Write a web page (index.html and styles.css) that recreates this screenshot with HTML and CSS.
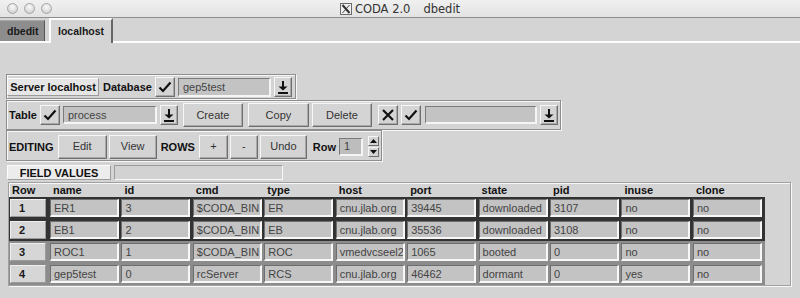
FILE: index.html
```html
<!DOCTYPE html>
<html>
<head>
<meta charset="utf-8">
<title>CODA 2.0 dbedit</title>
<link rel="stylesheet" href="styles.css">
</head>
<body>
<div class="window">
  <div class="titlebar">
    <div class="lights"><span class="light"></span><span class="light"></span><span class="light"></span></div>
    <div class="title">
      <svg class="xlogo" width="12" height="12" viewBox="0 0 12 12"><rect x="0.5" y="0.5" width="11" height="11" fill="#f0f0f0" stroke="#6a6a6a"/><line x1="2.5" y1="2" x2="9.5" y2="10" stroke="#333" stroke-width="2"/><line x1="9.5" y1="2" x2="2.5" y2="10" stroke="#333" stroke-width="0.9"/></svg>
      <span>CODA 2.0</span><span class="app">dbedit</span>
    </div>
    <div></div>
  </div>

  <div class="tabstrip">
    <div class="tab inactive">dbedit</div>
    <div class="tab active">localhost</div>
  </div>

  <div class="main">
    <div class="frame f-server">
      <div class="tag">Server localhost</div>
      <div class="lbl">Database</div>
      <div class="ibtn"><svg width="14" height="12" viewBox="0 0 14 12"><path d="M1.5 6.5 L5 10 L12.5 1.5" fill="none" stroke="#111" stroke-width="2.2"/></svg></div>
      <div class="field w93">gep5test</div>
      <div class="ibtn dl"><svg width="10" height="13" viewBox="0 0 10 13"><rect x="4" y="0" width="2" height="6" fill="#111"/><path d="M0.5 5.5 H9.5 L5 9.5 Z" fill="#111"/><rect x="0" y="11" width="10" height="2" fill="#111"/></svg></div>
    </div>

    <div class="frame f-table">
      <div class="lbl">Table</div>
      <div class="ibtn"><svg width="14" height="12" viewBox="0 0 14 12"><path d="M1.5 6.5 L5 10 L12.5 1.5" fill="none" stroke="#111" stroke-width="2.2"/></svg></div>
      <div class="field w94 short">process</div>
      <div class="ibtn dl"><svg width="10" height="13" viewBox="0 0 10 13"><rect x="4" y="0" width="2" height="6" fill="#111"/><path d="M0.5 5.5 H9.5 L5 9.5 Z" fill="#111"/><rect x="0" y="11" width="10" height="2" fill="#111"/></svg></div>
      <div class="btn w60 ml2">Create</div>
      <div class="btn w61 ml2">Copy</div>
      <div class="btn w60">Delete</div>
      <div class="ibtn ml3"><svg width="12" height="12" viewBox="0 0 12 12"><path d="M1 1 L11 11 M11 1 L1 11" stroke="#111" stroke-width="2.2"/></svg></div>
      <div class="ibtn"><svg width="14" height="12" viewBox="0 0 14 12"><path d="M1.5 6.5 L5 10 L12.5 1.5" fill="none" stroke="#111" stroke-width="2.2"/></svg></div>
      <div class="field w112 short ml1"></div>
      <div class="ibtn dl"><svg width="10" height="13" viewBox="0 0 10 13"><rect x="4" y="0" width="2" height="6" fill="#111"/><path d="M0.5 5.5 H9.5 L5 9.5 Z" fill="#111"/><rect x="0" y="11" width="10" height="2" fill="#111"/></svg></div>
    </div>

    <div class="frame f-edit">
      <div class="lbl">EDITING</div>
      <div class="btn w49 ml1">Edit</div>
      <div class="btn w48 tight">View</div>
      <div class="lbl">ROWS</div>
      <div class="btn w29 ml1">+</div>
      <div class="btn w28 tight">-</div>
      <div class="btn w47 tight">Undo</div>
      <div class="lbl ml2">Row</div>
      <div class="field spinfield">1</div>
      <div class="spinner ml2">
        <div class="sp"><svg width="7" height="4" viewBox="0 0 7 4"><path d="M0 4 L3.5 0 L7 4 Z" fill="#111"/></svg></div>
        <div class="sp"><svg width="7" height="4" viewBox="0 0 7 4"><path d="M0 0 L3.5 4 L7 0 Z" fill="#111"/></svg></div>
      </div>
    </div>

    <div class="fv">
      <div class="fvlabel">FIELD VALUES</div>
      <div class="fvbox"></div>
    </div>

    <div class="grid">
      <div class="head">
        <div class="h hrow">Row</div><div class="h">name</div><div class="h">id</div><div class="h">cmd</div><div class="h">type</div><div class="h">host</div><div class="h">port</div><div class="h">state</div><div class="h">pid</div><div class="h">inuse</div><div class="h">clone</div>
      </div>
      <div class="row dark">
        <div class="num">1</div><div class="cell">ER1</div><div class="cell">3</div><div class="cell">$CODA_BIN</div><div class="cell">ER</div><div class="cell">cnu.jlab.org</div><div class="cell">39445</div><div class="cell">downloaded</div><div class="cell">3107</div><div class="cell">no</div><div class="cell">no</div>
      </div>
      <div class="row dark">
        <div class="num">2</div><div class="cell">EB1</div><div class="cell">2</div><div class="cell">$CODA_BIN</div><div class="cell">EB</div><div class="cell">cnu.jlab.org</div><div class="cell">35536</div><div class="cell">downloaded</div><div class="cell">3108</div><div class="cell">no</div><div class="cell">no</div>
      </div>
      <div class="row grey">
        <div class="num">3</div><div class="cell">ROC1</div><div class="cell">1</div><div class="cell">$CODA_BIN</div><div class="cell">ROC</div><div class="cell">vmedvcseel2</div><div class="cell">1065</div><div class="cell">booted</div><div class="cell">0</div><div class="cell">no</div><div class="cell">no</div>
      </div>
      <div class="row grey">
        <div class="num">4</div><div class="cell">gep5test</div><div class="cell">0</div><div class="cell">rcServer</div><div class="cell">RCS</div><div class="cell">cnu.jlab.org</div><div class="cell">46462</div><div class="cell">dormant</div><div class="cell">0</div><div class="cell">yes</div><div class="cell">no</div>
      </div>
    </div>
  </div>
</div>
</body>
</html>
```

FILE: styles.css
```css
* { box-sizing: border-box; }

body {
  margin: 0;
  background: #d4d4d4;
  font-family: "Liberation Sans", Arial, sans-serif;
  font-size: 11px;
  color: #222;
}

.window {
  width: 800px;
  height: 298px;
  overflow: hidden;
  background: #d4d4d4;
}

/* title bar */
.titlebar {
  height: 18px;
  display: grid;
  grid-template-columns: 1fr auto 1fr;
  align-items: center;
  background: linear-gradient(#f0f0f0, #e3e3e3);
  border-bottom: 1px solid #8e8e8e;
}
.lights { display: flex; gap: 6px; padding-left: 7px; }
.light {
  width: 11px;
  height: 11px;
  border-radius: 50%;
  background: radial-gradient(circle at 50% 35%, #fbfbfb, #d8d8d8 65%, #c2c2c2);
  border: 1px solid #a6a6a6;
}
.title {
  display: flex;
  align-items: center;
  gap: 3px;
  font-family: "DejaVu Sans", sans-serif;
  font-size: 11.5px;
  color: #333;
  padding-top: 1px;
}
.title .app { margin-left: 10px; }

/* tabs */
.tabstrip {
  height: 25px;
  display: flex;
  align-items: flex-end;
  gap: 4px;
  border-bottom: 2px solid #fdfdfd;
}
.tab {
  font-weight: bold;
  font-size: 10.5px;
  color: #1a1a1a;
  display: flex;
  align-items: center;
}
.tab.inactive {
  width: 45px;
  height: 21px;
  padding-left: 7px;
  background: #8d8d8d;
  border-top: 1px solid #a8a8a8;
  border-right: 1px solid #555;
}
.tab.active {
  width: 64px;
  height: 25px;
  margin-bottom: -2px;
  padding-left: 7px;
  padding-bottom: 2px;
  background: #d4d4d4;
  border-top: 2px solid #fdfdfd;
  border-left: 2px solid #fdfdfd;
  border-right: 2px solid #666;
}

/* main */
.main { padding-left: 6px; }

.frame {
  display: flex;
  align-items: center;
  gap: 3px;
  width: fit-content;
  border: 1px solid #8e8e8e;
  box-shadow: 1px 1px 0 #f7f7f7, inset 1px 1px 0 #f7f7f7;
}
.f-server { margin-top: 31px; height: 25px; padding: 1px 3px 0 0; }
.f-table { margin-top: 1px; height: 30px; padding: 0 2px 0 1px; }
.f-edit { height: 31px; padding: 2px 2px 0 1px; }

.lbl { font-weight: bold; color: #111; padding-left: 1px; }

.tag {
  height: 18px;
  width: 92px;
  display: flex;
  align-items: center;
  justify-content: center;
  font-weight: bold;
  color: #111;
  background: #e6e6e6;
  border: 1px solid;
  border-color: #fbfbfb #9a9a9a #9a9a9a #fbfbfb;
}

.ibtn {
  width: 20px;
  height: 20px;
  display: flex;
  align-items: center;
  justify-content: center;
  background: #d4d4d4;
  border: 1px solid;
  border-color: #f7f7f7 #6f6f6f #6f6f6f #f7f7f7;
  box-shadow: inset -1px -1px 0 #a9a9a9;
}
.ibtn.dl { width: 18px; }

.field {
  height: 19px;
  display: flex;
  align-items: center;
  padding-left: 4px;
  background: #c3c3c3;
  color: #444;
  border-top: 1px solid #7a7a7a;
  border-left: 1px solid #7a7a7a;
  border-bottom: 2px solid #f5f5f5;
  border-right: 2px solid #f5f5f5;
}
.field.short { height: 18px; }
.spinfield { width: 24px; height: 18px; background: #bdbdbd; }

.btn {
  height: 24px;
  display: flex;
  align-items: center;
  justify-content: center;
  padding-bottom: 1px;
  background: #d4d4d4;
  color: #333;
  border: 1px solid;
  border-color: #f7f7f7 #6f6f6f #6f6f6f #f7f7f7;
  box-shadow: inset -1px -1px 0 #a9a9a9;
}
.btn.tight { margin-left: -1px; }

.w93 { width: 93px; }
.w94 { width: 94px; }
.w112 { width: 112px; }
.w60 { width: 60px; }
.w61 { width: 61px; }
.w49 { width: 49px; }
.w48 { width: 48px; }
.w47 { width: 47px; }
.w29 { width: 29px; }
.w28 { width: 28px; }
.ml1 { margin-left: 1px; }
.ml2 { margin-left: 2px; }
.ml3 { margin-left: 3px; }

.spinner { display: flex; flex-direction: column; gap: 1px; }
.sp {
  width: 11px;
  height: 10px;
  display: flex;
  align-items: center;
  justify-content: center;
  background: #d4d4d4;
  border: 1px solid;
  border-color: #f7f7f7 #6f6f6f #6f6f6f #f7f7f7;
}

/* field values */
.fv { display: flex; gap: 3px; margin-top: 4px; padding-left: 1px; height: 15px; }
.fvlabel {
  width: 104px;
  display: flex;
  align-items: center;
  justify-content: center;
  font-weight: bold;
  color: #111;
  background: #ececec;
  border: 1px solid;
  border-color: #fbfbfb #9c9c9c #9c9c9c #fbfbfb;
}
.fvbox {
  width: 169px;
  background: #d2d2d2;
  border: 1px solid;
  border-color: #9c9c9c #f7f7f7 #f7f7f7 #9c9c9c;
}

/* table */
.grid {
  margin: 2px 0 0 2px;
  width: 783px;
  height: 104px;
  border: 1px solid #a0a0a0;
  box-shadow: 1px 1px 0 #f7f7f7, inset 1px 1px 0 #f7f7f7;
}
.head, .row {
  display: grid;
  grid-template-columns: 37.5px repeat(10, 69px);
  column-gap: 2.45px;
  width: fit-content;
}
.head { height: 14px; padding-left: 1px; align-items: end; }
.h { font-weight: bold; color: #111; padding-left: 3px; line-height: 13px; }
.h.hrow { padding-left: 2px; }

.row { height: 22px; padding: 2px 3px 2px 1px; }
.row.dark { background: #333; }
.row.grey { background: #8c8c8c; }

.num {
  width: 36px;
  height: 18px;
  display: flex;
  align-items: center;
  padding-left: 8px;
  font-weight: bold;
  color: #1a1a1a;
  background: #d6d6d6;
  border: 1px solid;
  border-color: #efefef #9a9a9a #9a9a9a #efefef;
}
.cell {
  height: 18px;
  display: flex;
  align-items: center;
  padding-left: 3px;
  overflow: hidden;
  white-space: nowrap;
  color: #444;
  background: #c3c3c3;
  border-top: 1px solid #6e6e6e;
  border-left: 1px solid #6e6e6e;
  border-bottom: 2px solid #f7f7f7;
  border-right: 2px solid #f7f7f7;
}
```
